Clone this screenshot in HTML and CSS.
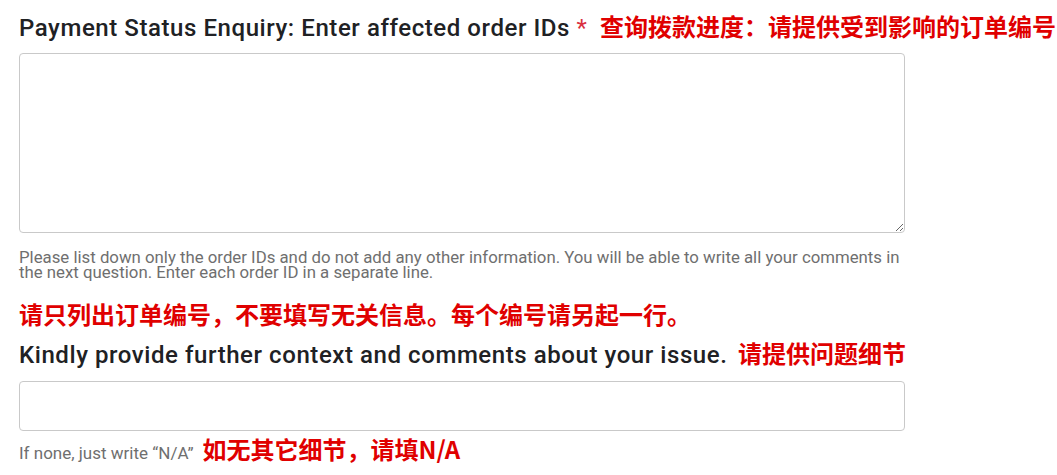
FILE: index.html
```html
<!DOCTYPE html>
<html lang="zh-CN">
<head>
  <meta charset="UTF-8">
  <title>Payment Status Enquiry</title>
  <link rel="stylesheet" href="styles.css">
</head>
<body>

  <form class="formulario">
    <!-- Pergunta 1: pedidos afetados -->
    <div class="campo">
      <label class="pergunta" for="pedidos">
        Payment Status Enquiry: Enter affected order IDs <span class="obrigatorio">*</span>
        <span class="traducao">查询拨款进度：请提供受到影响的订单编号</span>
      </label>
      <textarea id="pedidos" class="caixa-texto"></textarea>
      <p class="ajuda">Please list down only the order IDs and do not add any other information. You will be able to write all your comments in the next question. Enter each order ID in a separate line.</p>
      <p class="nota">请只列出订单编号，不要填写无关信息。每个编号请另起一行。</p>
    </div>

    <!-- Pergunta 2: comentarios -->
    <div class="campo">
      <label class="pergunta" for="comentarios">
        Kindly provide further context and comments about your issue.
        <span class="traducao">请提供问题细节</span>
      </label>
      <input type="text" id="comentarios" class="linha-texto">
      <div class="ajuda-linha">
        <span class="ajuda">If none, just write “N/A”</span>
        <span class="traducao">如无其它细节，请填N/A</span>
      </div>
    </div>
  </form>

</body>
</html>
```

FILE: styles.css
```css
body {
  margin: 0;
  padding: 14px 0 0 19px;
  background: #ffffff;
  font-family: Roboto, "Noto Sans CJK SC", sans-serif;
  color: #202124;
}

.formulario {
  width: 886px;
}

.campo {
  display: flex;
  flex-direction: column;
}

.pergunta {
  display: block;
  font-size: 24px;
  font-weight: 500;
  letter-spacing: 0.57px;
  line-height: 28px;
  white-space: nowrap;
  color: #202124;
}

.obrigatorio {
  color: #d93040;
  font-weight: 400;
  margin-right: 2px;
}

.traducao {
  font-family: "Noto Sans CJK SC", sans-serif;
  font-weight: bold;
  font-size: 24px;
  letter-spacing: 0;
  line-height: 1;
  color: #e00000;
  margin-left: 4px;
}

.caixa-texto {
  box-sizing: border-box;
  width: 886px;
  height: 180px;
  margin: 11px 0 0 0;
  border: 1px solid #c9c9c9;
  border-radius: 4px;
  font-family: Roboto, sans-serif;
  font-size: 16px;
}

.ajuda {
  margin: 17px 0 0 0;
  font-size: 16.8px;
  line-height: 15px;
  color: #6f6f6f;
}

.nota {
  margin: 19px 0 0 0;
  font-family: "Noto Sans CJK SC", sans-serif;
  font-weight: bold;
  font-size: 24px;
  line-height: 30px;
  color: #e00000;
}

.campo + .campo .pergunta {
  margin-top: 12px;
}

.linha-texto {
  box-sizing: border-box;
  width: 886px;
  height: 50px;
  margin: 12px 0 0 0;
  border: 1px solid #c9c9c9;
  border-radius: 4px;
  font-size: 16px;
}

.ajuda-linha {
  display: flex;
  align-items: baseline;
  margin-top: 6px;
  line-height: 28px;
}

.ajuda-linha .ajuda {
  margin: 0;
  font-size: 17px;
  line-height: 28px;
}

.ajuda-linha .traducao {
  margin-left: 9px;
}
```
